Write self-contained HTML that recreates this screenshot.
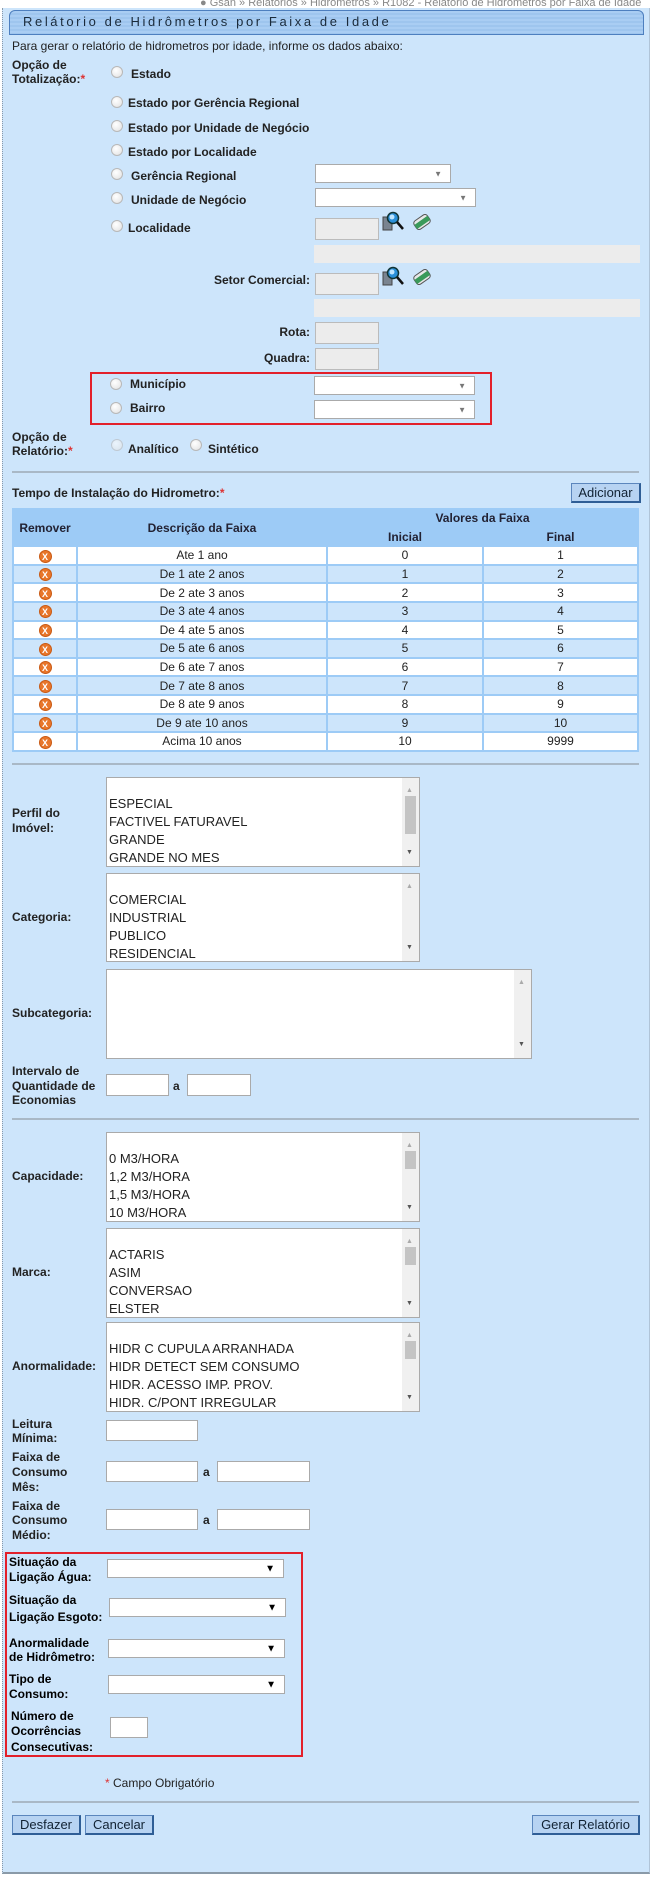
<!DOCTYPE html>
<html><head><meta charset="utf-8">
<style>
*{margin:0;padding:0;box-sizing:border-box}
body{width:656px;height:1885px;background:#fff;font-family:"Liberation Sans",Arial,sans-serif;font-size:12px;color:#222;position:relative;overflow:hidden}
#pg{position:absolute;left:2px;top:8px;width:648px;height:1866px;background:#cde5fb;border-left:1px dotted #8899aa;border-bottom:2px solid #8a9aa8;border-right:1px solid #b0c4d8}
.a{position:absolute;white-space:nowrap;line-height:14px}
.b{font-weight:bold}
.r{position:absolute;width:12px;height:12px;border-radius:50%;border:1px solid #b8b8b8;background:radial-gradient(circle at 40% 35%,#fff,#e0e0e0)}
.sel{position:absolute;background:#fff;border:1px solid #aaa}
.sel:after{content:"▼";position:absolute;right:8px;top:50%;transform:translateY(-50%);font-size:8px;color:#777}
.sel.k:after{color:#000;font-size:10px}
.in{position:absolute;background:#fff;border:1px solid #aaa}
.gr{position:absolute;background:#ececec;border:1px solid #bbb}
.bar{position:absolute;background:#ececec}
.hr{position:absolute;left:12px;width:627px;height:2px;background:#a9b8c6}
.lb{position:absolute;background:#fff;border:1px solid #aaa;font-size:13px;line-height:18px;padding-left:2px;color:#222}
.lb .sb{position:absolute;right:0;top:0;bottom:0;width:17px;background:#f0f0f0}
.lb .sb:before{content:"▲";position:absolute;top:4px;left:4px;font-size:7px;color:#aaa}
.lb .sb:after{content:"▼";position:absolute;bottom:4px;left:4px;font-size:7px;color:#555}
.lb .th{position:absolute;right:3px;width:11px;background:#c4c4c4}
.btn{position:absolute;background:#b7d3f2;border:1px solid #5b86bd;border-right:2px solid #2f5e96;border-bottom:2px solid #2f5e96;font-size:13px;color:#123;text-align:center;line-height:17px}
table{position:absolute;left:12px;top:508px;width:627px;border-spacing:2px;background:#9dcbf6;border-collapse:separate}
td,th{text-align:center;font-size:12px;height:16.6px;line-height:14px}
th{background:#9dcbf6;font-weight:bold;color:#223}
tr.w td{background:#fff}
tr.c td{background:#cde5fb}
.x{display:inline-block;width:13px;height:13px;border-radius:50%;background:#e8762a;color:#fff;font-size:9px;font-weight:bold;line-height:13px;vertical-align:middle;border:1px solid #c95a14}
.red{position:absolute;border:2px solid #e3202a}
.ast{color:#d33}
</style></head><body>
<div class="a" style="left:200px;top:-4px;color:#888;font-size:11px">● Gsan » Relatórios » Hidrômetros » R1082 - Relatório de Hidrômetros por Faixa de Idade</div>
<div id="pg"></div>
<!-- title bar -->
<div style="position:absolute;left:9px;top:10px;width:635px;height:25px;border:1px solid #4d7fbf;border-radius:6px 6px 0 0;background:repeating-linear-gradient(#a9cdf3 0 2px,#9ec5ee 2px 4px)"></div>
<div class="a" style="left:23px;top:15px;font-size:13px;letter-spacing:2.6px;color:#1a2a3a">Relátorio de Hidrômetros por Faixa de Idade</div>
<div class="a" style="left:12px;top:39px;font-size:12px">Para gerar o relatório de hidrometros por idade, informe os dados abaixo:</div>

<div class="a b" style="left:12px;top:58px">Opção de</div>
<div class="a b" style="left:12px;top:72px">Totalização:<span class="ast">*</span></div>
<div class="r" style="left:111px;top:66px"></div><div class="a b" style="left:131px;top:67px">Estado</div>
<div class="r" style="left:111px;top:96px"></div><div class="a b" style="left:128px;top:96px">Estado por Gerência Regional</div>
<div class="r" style="left:111px;top:120px"></div><div class="a b" style="left:128px;top:121px">Estado por Unidade de Negócio</div>
<div class="r" style="left:111px;top:144px"></div><div class="a b" style="left:128px;top:145px">Estado por Localidade</div>
<div class="r" style="left:111px;top:168px"></div><div class="a b" style="left:131px;top:169px">Gerência Regional</div>
<div class="sel" style="left:315px;top:164px;width:136px;height:19px"></div>
<div class="r" style="left:111px;top:192px"></div><div class="a b" style="left:131px;top:193px">Unidade de Negócio</div>
<div class="sel" style="left:315px;top:188px;width:161px;height:19px"></div>
<div class="r" style="left:111px;top:220px"></div><div class="a b" style="left:128px;top:221px">Localidade</div>
<div class="gr" style="left:315px;top:218px;width:64px;height:22px"></div>
<svg style="position:absolute;left:382px;top:211px" width="24" height="22" viewBox="0 0 24 22"><rect x="1" y="6" width="9" height="13" fill="#7a8490" stroke="#444"/><circle cx="11" cy="7" r="5.5" fill="#2a8fd8" stroke="#133" stroke-width="1.5"/><circle cx="10" cy="6" r="2.5" fill="#bfe5ff"/><line x1="15" y1="11" x2="21" y2="18" stroke="#111" stroke-width="2.5"/></svg>
<svg style="position:absolute;left:411px;top:212px" width="22" height="20" viewBox="0 0 22 20"><g transform="rotate(-35 11 10)"><rect x="3" y="5" width="16" height="10" rx="3" fill="#e8e8e8" stroke="#555"/><rect x="3" y="8" width="16" height="5" fill="#3a9a5a"/></g></svg>
<div class="bar" style="left:314px;top:245px;width:326px;height:18px"></div>
<div class="a b" style="left:200px;top:273px;width:110px;text-align:right">Setor Comercial:</div>
<div class="gr" style="left:315px;top:273px;width:64px;height:22px"></div>
<svg style="position:absolute;left:382px;top:266px" width="24" height="22" viewBox="0 0 24 22"><rect x="1" y="6" width="9" height="13" fill="#7a8490" stroke="#444"/><circle cx="11" cy="7" r="5.5" fill="#2a8fd8" stroke="#133" stroke-width="1.5"/><circle cx="10" cy="6" r="2.5" fill="#bfe5ff"/><line x1="15" y1="11" x2="21" y2="18" stroke="#111" stroke-width="2.5"/></svg>
<svg style="position:absolute;left:411px;top:267px" width="22" height="20" viewBox="0 0 22 20"><g transform="rotate(-35 11 10)"><rect x="3" y="5" width="16" height="10" rx="3" fill="#e8e8e8" stroke="#555"/><rect x="3" y="8" width="16" height="5" fill="#3a9a5a"/></g></svg>
<div class="bar" style="left:314px;top:299px;width:326px;height:18px"></div>
<div class="a b" style="left:200px;top:325px;width:110px;text-align:right">Rota:</div>
<div class="gr" style="left:315px;top:322px;width:64px;height:22px"></div>
<div class="a b" style="left:200px;top:351px;width:110px;text-align:right">Quadra:</div>
<div class="gr" style="left:315px;top:348px;width:64px;height:22px"></div>

<div class="red" style="left:90px;top:372px;width:402px;height:53px"></div>
<div class="r" style="left:110px;top:378px"></div><div class="a b" style="left:130px;top:377px">Município</div>
<div class="sel" style="left:314px;top:376px;width:161px;height:19px"></div>
<div class="r" style="left:110px;top:402px"></div><div class="a b" style="left:130px;top:401px">Bairro</div>
<div class="sel" style="left:314px;top:400px;width:161px;height:19px"></div>

<div class="a b" style="left:12px;top:430px">Opção de</div>
<div class="a b" style="left:12px;top:444px">Relatório:<span class="ast">*</span></div>
<div class="r" style="left:111px;top:439px;opacity:.6"></div><div class="a b" style="left:128px;top:442px">Analítico</div>
<div class="r" style="left:190px;top:439px"></div><div class="a b" style="left:208px;top:442px">Sintético</div>
<div class="hr" style="top:471px"></div>

<div class="a b" style="left:12px;top:486px">Tempo de Instalação do Hidrometro:<span class="ast">*</span></div>
<div class="btn" style="left:571px;top:483px;width:70px;height:20px">Adicionar</div>

<table>
<tr><th rowspan="2" style="width:62px">Remover</th><th rowspan="2" style="width:248px">Descrição da Faixa</th><th colspan="2">Valores da Faixa</th></tr>
<tr><th style="width:154px">Inicial</th><th>Final</th></tr>
<tr class="w"><td><span class="x">X</span></td><td>Ate 1 ano</td><td>0</td><td>1</td></tr>
<tr class="c"><td><span class="x">X</span></td><td>De 1 ate 2 anos</td><td>1</td><td>2</td></tr>
<tr class="w"><td><span class="x">X</span></td><td>De 2 ate 3 anos</td><td>2</td><td>3</td></tr>
<tr class="c"><td><span class="x">X</span></td><td>De 3 ate 4 anos</td><td>3</td><td>4</td></tr>
<tr class="w"><td><span class="x">X</span></td><td>De 4 ate 5 anos</td><td>4</td><td>5</td></tr>
<tr class="c"><td><span class="x">X</span></td><td>De 5 ate 6 anos</td><td>5</td><td>6</td></tr>
<tr class="w"><td><span class="x">X</span></td><td>De 6 ate 7 anos</td><td>6</td><td>7</td></tr>
<tr class="c"><td><span class="x">X</span></td><td>De 7 ate 8 anos</td><td>7</td><td>8</td></tr>
<tr class="w"><td><span class="x">X</span></td><td>De 8 ate 9 anos</td><td>8</td><td>9</td></tr>
<tr class="c"><td><span class="x">X</span></td><td>De 9 ate 10 anos</td><td>9</td><td>10</td></tr>
<tr class="w"><td><span class="x">X</span></td><td>Acima 10 anos</td><td>10</td><td>9999</td></tr>
</table>
<div class="hr" style="top:763px"></div>

<div class="a b" style="left:12px;top:806px">Perfil do</div>
<div class="a b" style="left:12px;top:821px">Imóvel:</div>
<div class="lb" style="left:106px;top:777px;width:314px;height:90px;padding-top:17px">ESPECIAL<br>FACTIVEL FATURAVEL<br>GRANDE<br>GRANDE NO MES<div class="sb"><div class="th" style="top:18px;height:38px"></div></div></div>

<div class="a b" style="left:12px;top:910px">Categoria:</div>
<div class="lb" style="left:106px;top:873px;width:314px;height:89px;padding-top:17px">COMERCIAL<br>INDUSTRIAL<br>PUBLICO<br>RESIDENCIAL<div class="sb"></div></div>

<div class="a b" style="left:12px;top:1006px">Subcategoria:</div>
<div class="lb" style="left:106px;top:969px;width:426px;height:90px"><div class="sb"></div></div>

<div class="a b" style="left:12px;top:1064px">Intervalo de</div>
<div class="a b" style="left:12px;top:1079px">Quantidade de</div>
<div class="a b" style="left:12px;top:1093px">Economias</div>
<div class="in" style="left:106px;top:1074px;width:63px;height:22px"></div>
<div class="a b" style="left:173px;top:1079px">a</div>
<div class="in" style="left:187px;top:1074px;width:64px;height:22px"></div>
<div class="hr" style="top:1118px"></div>

<div class="a b" style="left:12px;top:1169px">Capacidade:</div>
<div class="lb" style="left:106px;top:1132px;width:314px;height:90px;padding-top:17px">0 M3/HORA<br>1,2 M3/HORA<br>1,5 M3/HORA<br>10 M3/HORA<div class="sb"><div class="th" style="top:18px;height:18px"></div></div></div>

<div class="a b" style="left:12px;top:1265px">Marca:</div>
<div class="lb" style="left:106px;top:1228px;width:314px;height:90px;padding-top:17px">ACTARIS<br>ASIM<br>CONVERSAO<br>ELSTER<div class="sb"><div class="th" style="top:18px;height:18px"></div></div></div>

<div class="a b" style="left:12px;top:1359px">Anormalidade:</div>
<div class="lb" style="left:106px;top:1322px;width:314px;height:90px;padding-top:17px">HIDR C CUPULA ARRANHADA<br>HIDR DETECT SEM CONSUMO<br>HIDR. ACESSO IMP. PROV.<br>HIDR. C/PONT IRREGULAR<div class="sb"><div class="th" style="top:18px;height:18px"></div></div></div>

<div class="a b" style="left:12px;top:1417px">Leitura</div>
<div class="a b" style="left:12px;top:1431px">Mínima:</div>
<div class="in" style="left:106px;top:1420px;width:92px;height:21px"></div>

<div class="a b" style="left:12px;top:1450px">Faixa de</div>
<div class="a b" style="left:12px;top:1465px">Consumo</div>
<div class="a b" style="left:12px;top:1480px">Mês:</div>
<div class="in" style="left:106px;top:1461px;width:92px;height:21px"></div>
<div class="a b" style="left:203px;top:1465px">a</div>
<div class="in" style="left:217px;top:1461px;width:93px;height:21px"></div>

<div class="a b" style="left:12px;top:1499px">Faixa de</div>
<div class="a b" style="left:12px;top:1513px">Consumo</div>
<div class="a b" style="left:12px;top:1528px">Médio:</div>
<div class="in" style="left:106px;top:1509px;width:92px;height:21px"></div>
<div class="a b" style="left:203px;top:1513px">a</div>
<div class="in" style="left:217px;top:1509px;width:93px;height:21px"></div>

<div class="red" style="left:5px;top:1552px;width:298px;height:205px"></div>
<div class="a b" style="left:9px;top:1555px;color:#000">Situação da</div>
<div class="a b" style="left:9px;top:1570px;color:#000">Ligação Água:</div>
<div class="sel k" style="left:107px;top:1559px;width:177px;height:19px"></div>
<div class="a b" style="left:9px;top:1593px;color:#000">Situação da</div>
<div class="a b" style="left:9px;top:1610px;color:#000">Ligação Esgoto:</div>
<div class="sel k" style="left:109px;top:1598px;width:177px;height:19px"></div>
<div class="a b" style="left:9px;top:1636px;color:#000">Anormalidade</div>
<div class="a b" style="left:9px;top:1650px;color:#000">de Hidrômetro:</div>
<div class="sel k" style="left:108px;top:1639px;width:177px;height:19px"></div>
<div class="a b" style="left:9px;top:1672px;color:#000">Tipo de</div>
<div class="a b" style="left:9px;top:1687px;color:#000">Consumo:</div>
<div class="sel k" style="left:108px;top:1675px;width:177px;height:19px"></div>
<div class="a b" style="left:11px;top:1709px;color:#000">Número de</div>
<div class="a b" style="left:11px;top:1724px;color:#000">Ocorrências</div>
<div class="a b" style="left:11px;top:1740px;color:#000">Consecutivas:</div>
<div class="in" style="left:110px;top:1717px;width:38px;height:21px"></div>

<div class="a" style="left:105px;top:1776px"><span class="ast">*</span> Campo Obrigatório</div>
<div class="hr" style="top:1801px"></div>
<div class="btn" style="left:12px;top:1815px;width:69px;height:20px">Desfazer</div>
<div class="btn" style="left:85px;top:1815px;width:69px;height:20px">Cancelar</div>
<div class="btn" style="left:532px;top:1815px;width:108px;height:20px">Gerar Relatório</div>
</body></html>
